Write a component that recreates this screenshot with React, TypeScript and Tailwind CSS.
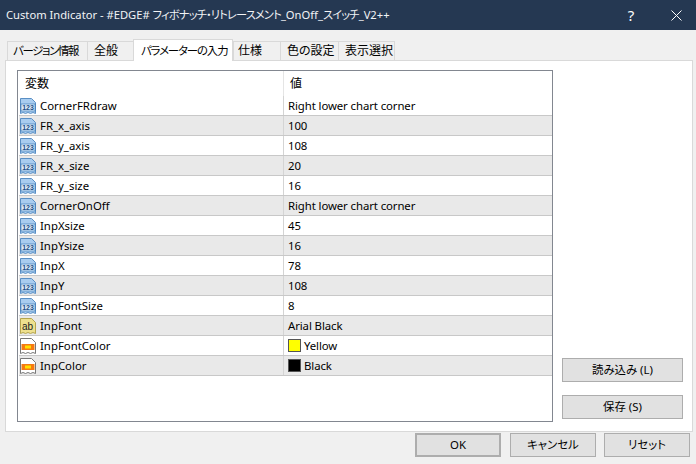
const rows: [string, string, string, string?][] = [
  ["n", "CornerFRdraw", "Right lower chart corner"],
  ["n", "FR_x_axis", "100"],
  ["n", "FR_y_axis", "108"],
  ["n", "FR_x_size", "20"],
  ["n", "FR_y_size", "16"],
  ["n", "CornerOnOff", "Right lower chart corner"],
  ["n", "InpXsize", "45"],
  ["n", "InpYsize", "16"],
  ["n", "InpX", "78"],
  ["n", "InpY", "108"],
  ["n", "InpFontSize", "8"],
  ["s", "InpFont", "Arial Black"],
  ["c", "InpFontColor", "Yellow", "bg-[#ffff00]"],
  ["c", "InpColor", "Black", "bg-black"],
];

function Icon({ kind }: { kind: string }) {
  const fill = kind === "n" ? "#a9cdf0" : kind === "s" ? "#eee08e" : "#ffffff";
  const stroke = kind === "n" ? "#5a8fc4" : kind === "s" ? "#b5a54e" : "#777777";
  return (
    <svg width="16" height="16" viewBox="0 0 16 16" className="shrink-0">
      <path d="M0.5 0.5H11.5L15.5 4.5V15.5L13 14.5L10.5 15.5L8 14.5L5.5 15.5L3 14.5L0.5 15.5Z" fill={fill} stroke={stroke} />
      {kind === "n" && <rect x="1" y="6" width="14" height="7" fill="#d8e9f8" stroke="#2f6fad" strokeWidth="0.6" />}
      {kind === "n" && (
        <text x="8" y="12" textAnchor="middle" fontSize="7" fontWeight="700" fill="#1d4f86" fontFamily="Liberation Sans, sans-serif">123</text>
      )}
      {kind === "s" && (
        <text x="7.5" y="12" textAnchor="middle" fontSize="10" fill="#222222" fontFamily="Liberation Sans, sans-serif">ab</text>
      )}
      {kind === "c" && <rect x="1.5" y="6" width="13" height="6" fill="#f57a10" />}
      {kind === "c" && <rect x="5" y="7.5" width="6" height="3" fill="#ffe000" />}
    </svg>
  );
}

const tabs = ["バージョン情報", "全般", "パラメーターの入力", "仕様", "色の設定", "表示選択"];
const tabW = ["w-[80px]", "w-[46px]", "w-[100px]", "w-[47px]", "w-[58px]", "w-[57px]"];
const tabT = [
  "pl-[5px] text-[11.4px] tracking-[-1.3px]",
  "pl-[6px] text-[12px]",
  "pl-[7px] text-[11.4px] tracking-[-1.1px]",
  "pl-[4px] text-[12px]",
  "pl-[6px] text-[12px]",
  "pl-[6px] text-[12px]",
];

function Btn({ label, cls }: { label: string; cls: string }) {
  return (
    <div className={`flex items-center justify-center bg-[#e1e1e1] border border-[#adadad] text-black ${cls}`}>{label}</div>
  );
}

export default function App() {
  return (
    <div
      className="w-[696px] h-[464px] bg-[#f0f0f0] flex flex-col overflow-hidden text-[11.4px] text-black [font-feature-settings:'palt']"
      style={{ fontFamily: '"Noto Sans", "Noto Sans CJK JP", sans-serif' }}
    >
      <div className="h-[30px] shrink-0 bg-[#253852] text-[#f2f4f6] flex items-center pl-[6px] text-[11.2px]">
        <span className="flex-1 whitespace-nowrap">
          Custom Indicator - #EDGE# <span className="tracking-[-0.8px]">フィボナッチ・リトレースメント</span>_OnOff_<span className="tracking-[-0.8px]">スイッチ</span>_V2++
        </span>
        <span className="w-[50px] text-center text-[15px] text-white">?</span>
        <span className="w-[40px] flex justify-center">
          <svg width="11" height="11" viewBox="0 0 11 11"><path d="M0.5 0.5L10.5 10.5M10.5 0.5L0.5 10.5" stroke="#fff" fill="none" /></svg>
        </span>
      </div>
      <div className="flex items-end h-[30px] shrink-0 pl-[7px]">
        {tabs.map((t, i) => (
          <div
            key={t}
            className={`${tabW[i]} ${tabT[i]} flex items-center whitespace-nowrap border-[#d9d9d9] border-l border-t ${i === 5 ? "border-r" : ""} ${
              i === 2 ? "h-[22px] bg-white border-r -mb-px relative z-10" : "h-[19px] bg-[#f0f0f0]"
            }`}
          >
            {t}
          </div>
        ))}
      </div>
      <div className="ml-[5px] mr-[3px] h-[372px] shrink-0 bg-white border border-[#d9d9d9] flex pt-[9px] pl-[11px]">
        <div className="w-[536px] h-[352px] border border-[#828790] shrink-0 flex flex-col">
          <div className="h-[25px] flex shrink-0">
            <div className="w-[266px] pl-[7px] flex items-center border-r border-[#e5e5e5] text-[12px]">変数</div>
            <div className="pl-[6px] flex items-center text-[12px]">値</div>
          </div>
          {rows.map(([k, n, v, c], i) => (
            <div key={n} className={`h-[20px] flex shrink-0 border-b border-[#c8c8c8] ml-px ${i % 2 ? "bg-[#e9e9e9]" : "bg-white"}`}>
              <div className="w-[265px] flex items-center gap-[4px] pl-[1px] border-r border-[#d4d4d4]">
                <Icon kind={k} />
                <span>{n}</span>
              </div>
              <div className="flex items-center pl-[4px] gap-[3px] tracking-[-0.1px]">
                {c && <span className={`w-[13px] h-[13px] border border-[#555555] ${c}`} />}
                <span>{v}</span>
              </div>
            </div>
          ))}
        </div>
        <div className="flex-1 flex flex-col pl-[9px] pt-[288px] gap-[13px]">
          <Btn label="読み込み (L)" cls="w-[121px] h-[24px]" />
          <Btn label="保存 (S)" cls="w-[121px] h-[24px]" />
        </div>
      </div>
      <div className="flex justify-end pr-[6px] mt-px">
        <Btn label="OK" cls="w-[86px] h-[24px] border-[2px] border-[#0078d7]" />
        <Btn label="キャンセル" cls="w-[86px] h-[24px] ml-[9px]" />
        <Btn label="リセット" cls="w-[86px] h-[24px] ml-[8px]" />
      </div>
    </div>
  );
}
